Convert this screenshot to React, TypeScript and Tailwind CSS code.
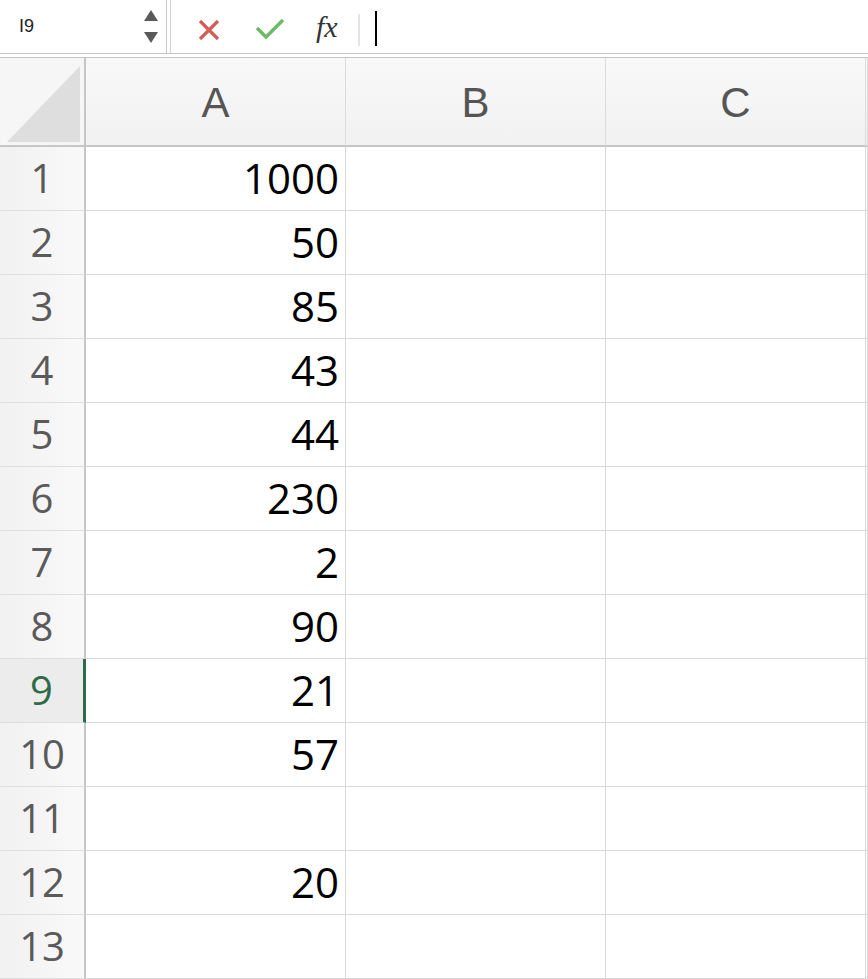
import React from "react";

const rows: (string | null)[] = ["1000", "50", "85", "43", "44", "230", "2", "90", "21", "57", null, "20", null];

export default function App() {
  return (
    <div className="w-[868px] h-[979px] overflow-hidden bg-white" style={{ fontFamily: '"Open Sans", sans-serif' }}>
      {/* Formula bar */}
      <div className="flex h-[54px] border-b border-[#c4c4c4] bg-white">
        <div className="relative w-[167px] border-r border-[#c8c8c8] flex items-center">
          <span className="ml-[19px] text-[18px] text-[#222]" style={{ fontFamily: '"Liberation Sans", sans-serif' }}>I9</span>
          <svg className="absolute left-[143px] top-[9px]" width="16" height="36" viewBox="0 0 16 36">
            <polygon points="8,1 15,12 1,12" fill="#5a5a5a" />
            <polygon points="1,23 15,23 8,34" fill="#5a5a5a" />
          </svg>
        </div>
        <div className="w-[3px]" />
        <div className="relative flex-1 border-l border-[#d0d0d0]">
          <svg className="absolute left-[27px] top-[19px]" width="22" height="22" viewBox="0 0 22 22">
            <path d="M2 2 L20 20 M20 2 L2 20" stroke="#d65b54" strokeWidth="3.2" />
          </svg>
          <svg className="absolute left-[84px] top-[18px]" width="30" height="22" viewBox="0 0 30 22">
            <path d="M2 10 L11 19 L28 2" stroke="#6dba66" strokeWidth="3.4" fill="none" />
          </svg>
          <span
            className="absolute left-[145px] top-[12px] text-[30px] italic text-[#333] leading-none"
            style={{ fontFamily: '"Liberation Serif", serif' }}
          >
            fx
          </span>
          <div className="absolute left-[187px] top-[14px] w-[2px] h-[32px] bg-[#e4e4e4]" />
          <div className="absolute left-[204px] top-[11px] w-[2px] h-[35px] bg-black" />
        </div>
      </div>
      <div className="h-[4px] border-b border-[#c4c4c4]" />

      {/* Grid */}
      <div className="grid grid-cols-[86px_260px_260px_260px_1fr]">
        <div className="h-[89px] border-b-2 border-r-2 border-[#c6c6c6] bg-[#f6f6f6] relative">
          <svg className="absolute left-[7px] top-[8px]" width="74" height="76" viewBox="0 0 74 76">
            <polygon points="73,0 73,76 0,76" fill="#dedede" />
          </svg>
        </div>
        {["A", "B", "C", ""].map((c, i) => (
          <div
            key={i}
            className="h-[89px] border-b-2 border-[#c6c6c6] border-r border-r-[#dcdcdc] bg-gradient-to-b from-[#f9f9f9] to-[#f1f1f1] flex items-center justify-center text-[42px] text-[#555] pt-[2px]"
            style={{ fontFamily: '"Liberation Sans", sans-serif' }}
          >
            {c}
          </div>
        ))}
        {rows.map((v, r) => {
          const sel = r === 8;
          return (
            <React.Fragment key={r}>
              <div
                className={
                  "h-[64px] border-b border-b-[#dedede] flex items-center justify-center text-[40px] pb-[2px] " +
                  (sel
                    ? "bg-[#ececec] border-r-[3px] border-r-[#2e6b46] text-[#2e6b46]"
                    : "bg-gradient-to-r from-[#f1f1f1] to-[#f9f9f9] border-r-2 border-r-[#c6c6c6] text-[#5a5a5a]")
                }
              >
                {r + 1}
              </div>
              <div className="h-[64px] border-b border-r border-[#d8d8d8] flex items-center justify-end pr-[6px] text-[42px] text-black pb-[2px]">
                {v}
              </div>
              <div className="h-[64px] border-b border-r border-[#d8d8d8]" />
              <div className="h-[64px] border-b border-r border-[#d8d8d8]" />
              <div className="h-[64px] border-b border-r border-[#d8d8d8]" />
            </React.Fragment>
          );
        })}
      </div>
    </div>
  );
}
